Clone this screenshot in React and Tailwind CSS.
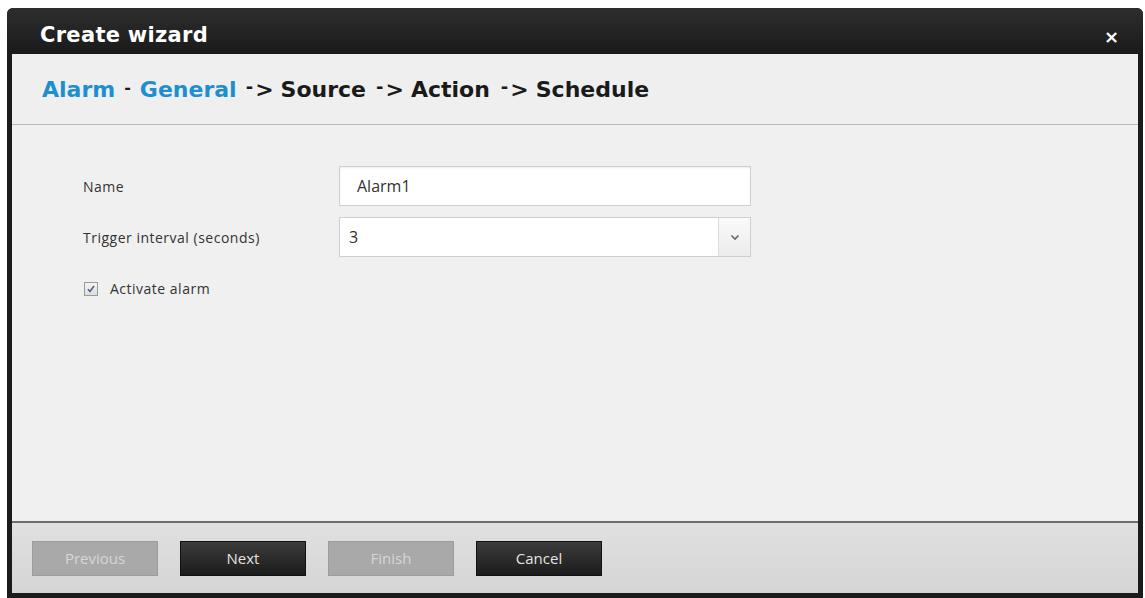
const ui = { fontFamily: '"Open Sans", "Noto Sans", sans-serif' };
const heading = { fontFamily: '"DejaVu Sans", Verdana, sans-serif' };

function WizardButton({ label, disabled }) {
  return (
    <button
      type="button"
      disabled={disabled}
      className={
        disabled
          ? "w-[126px] h-[35px] bg-[#a9a9a9] border border-[#9c9c9c] text-[#d6d6d6] text-[15px]"
          : "w-[126px] h-[35px] bg-gradient-to-b from-[#3c3c3c] to-[#1c1c1c] border border-[#111] text-[#e2e2e2] text-[15px]"
      }
      style={ui}
    >
      {label}
    </button>
  );
}

function Arrow() {
  return (
    <span className="flex items-baseline text-[#1a1a1a]">
      <span className="text-[18px] relative -top-[4px] mr-[2px]">-</span>
      <span>&gt;</span>
    </span>
  );
}

function Field({ label, children }) {
  return (
    <div className="flex items-center h-[40px]">
      <div className="w-[256px] text-[14px] tracking-[0.5px] text-[#333]">{label}</div>
      {children}
    </div>
  );
}

export default function App() {
  return (
    <div className="w-[1145px] h-[598px] bg-white pt-[8px] pl-[7px] overflow-hidden" style={ui}>
      <div className="w-[1136px] h-[590px] flex flex-col bg-[#1b1b1b] rounded-t-[6px] px-[5px] pb-[5px]">

        {/* Title bar */}
        <div className="h-[46px] flex items-center justify-between -mx-[5px] pt-[10px] pl-[33px] pr-[24px] bg-gradient-to-b from-[#2e2e2e] to-[#1a1a1a] rounded-t-[6px]">
          <span className="text-white font-bold text-[21px] tracking-[0.3px]" style={heading}>
            Create wizard
          </span>
          <span className="text-white font-bold text-[18px] leading-none pt-[2px]" style={heading}>×</span>
        </div>

        {/* Step trail */}
        <div className="h-[71px] bg-[#efefef] border-b border-[#b9b9b9] flex items-center pl-[30px]">
          <div className="flex items-baseline text-[22px] font-bold text-[#1a1a1a]" style={heading}>
            <span className="text-[#1d8fd1]">Alarm</span>
            <span className="text-[16px] relative -top-[4px] mx-[9px]">-</span>
            <span className="text-[#1d8fd1] mr-[9px]">General</span>
            <Arrow />
            <span className="ml-[7px] mr-[10px]">Source</span>
            <Arrow />
            <span className="ml-[7px] mr-[11px]">Action</span>
            <Arrow />
            <span className="ml-[7px]">Schedule</span>
          </div>
        </div>

        {/* Form body */}
        <div className="flex-1 bg-[#f0f0f0] border-b-2 border-[#6c6c6c] pl-[71px] pt-[41px]">
          <div className="flex flex-col gap-[11px]">
            <Field label="Name">
              <div className="w-[412px] h-[40px] bg-white border border-[#cfcfcf] shadow-[inset_0_1px_2px_rgba(0,0,0,0.08)] flex items-center pl-[17px] text-[16px] text-[#333]">
                Alarm1
              </div>
            </Field>
            <Field label="Trigger interval (seconds)">
              <div className="w-[412px] h-[40px] bg-white border border-[#cfcfcf] flex items-center text-[16px] text-[#333]">
                <span className="flex-1 pl-[9px]">3</span>
                <span className="w-[32px] h-full border-l border-[#dcdcdc] bg-gradient-to-b from-[#fafafa] to-[#ececec] flex items-center justify-center">
                  <svg width="10" height="7" viewBox="0 0 10 7">
                    <path d="M1.5 1.5 L5 5 L8.5 1.5" fill="none" stroke="#666" strokeWidth="1.6" />
                  </svg>
                </span>
              </div>
            </Field>
          </div>
          <label className="flex items-center mt-[21px] ml-[1px] text-[14px] tracking-[0.5px] text-[#333]">
            <span className="w-[14px] h-[14px] border border-[#9a9a9a] bg-gradient-to-b from-[#f4f4f4] to-[#dedede] flex items-center justify-center mr-[12px]">
              <svg width="10" height="10" viewBox="0 0 10 10">
                <path d="M2 5.2 L4 7.5 L8 2" fill="none" stroke="#4a5f86" strokeWidth="1.5" />
              </svg>
            </span>
            Activate alarm
          </label>
        </div>

        {/* Footer buttons */}
        <div className="h-[70px] bg-gradient-to-b from-[#e0e0e0] to-[#d5d5d5] flex items-start pt-[18px] pl-[20px] gap-[22px]">
          <WizardButton label="Previous" disabled />
          <WizardButton label="Next" />
          <WizardButton label="Finish" disabled />
          <WizardButton label="Cancel" />
        </div>
      </div>
    </div>
  );
}
